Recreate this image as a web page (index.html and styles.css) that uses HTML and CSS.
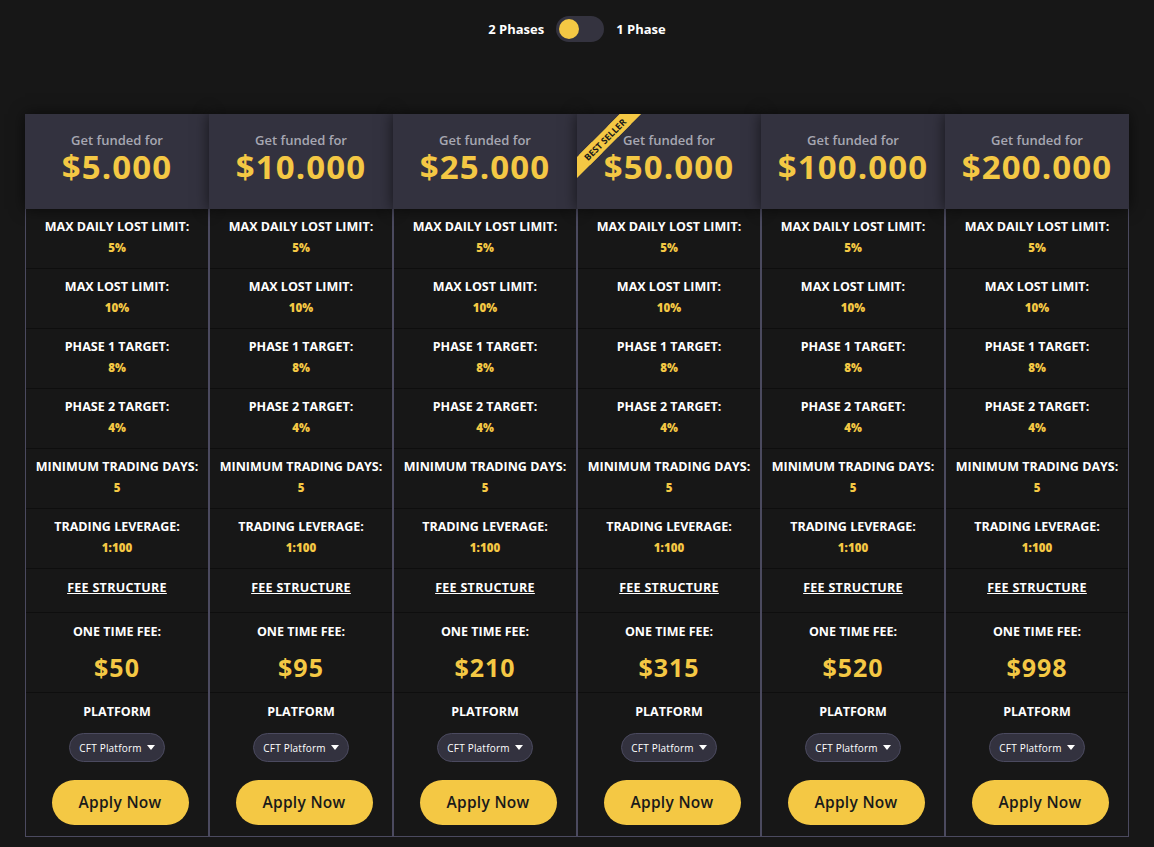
FILE: index.html
```html
<!DOCTYPE html>
<html lang="en">
<head>
    <meta charset="UTF-8">
    <meta name="viewport" content="width=device-width, initial-scale=1.0">
    <title>Funding Challenges</title>
    <link rel="stylesheet" href="styles.css">
</head>
<body>
    <!-- Phase switch -->
    <div class="phase-switch">
        <span>2 Phases</span>
        <div class="toggle"><div class="knob"></div></div>
        <span>1 Phase</span>
    </div>

    <!-- Plans -->
    <div class="plans">
        <div class="plan">
            <div class="plan-head"><p class="head-label">Get funded for</p><p class="head-price">$5.000</p></div>
            <div class="plan-body">
                <div class="row"><p class="row-title">MAX DAILY LOST LIMIT:</p><p class="row-value">5%</p></div>
                <div class="row"><p class="row-title">MAX LOST LIMIT:</p><p class="row-value">10%</p></div>
                <div class="row"><p class="row-title">PHASE 1 TARGET:</p><p class="row-value">8%</p></div>
                <div class="row"><p class="row-title">PHASE 2 TARGET:</p><p class="row-value">4%</p></div>
                <div class="row"><p class="row-title">MINIMUM TRADING DAYS:</p><p class="row-value">5</p></div>
                <div class="row"><p class="row-title">TRADING LEVERAGE:</p><p class="row-value">1:100</p></div>
                <div class="row fee-link"><a href="#">FEE STRUCTURE</a></div>
                <div class="row fee"><p class="row-title">ONE TIME FEE:</p><p class="fee-price">$50</p></div>
                <div class="platform">
                    <p class="row-title">PLATFORM</p>
                    <button class="dropdown">CFT Platform <svg width="8" height="5" viewBox="0 0 8 5"><path d="M0 0h8L4 5z" fill="#fff"/></svg></button>
                    <button class="apply">Apply Now</button>
                </div>
            </div>
        </div>
        <div class="plan">
            <div class="plan-head"><p class="head-label">Get funded for</p><p class="head-price">$10.000</p></div>
            <div class="plan-body">
                <div class="row"><p class="row-title">MAX DAILY LOST LIMIT:</p><p class="row-value">5%</p></div>
                <div class="row"><p class="row-title">MAX LOST LIMIT:</p><p class="row-value">10%</p></div>
                <div class="row"><p class="row-title">PHASE 1 TARGET:</p><p class="row-value">8%</p></div>
                <div class="row"><p class="row-title">PHASE 2 TARGET:</p><p class="row-value">4%</p></div>
                <div class="row"><p class="row-title">MINIMUM TRADING DAYS:</p><p class="row-value">5</p></div>
                <div class="row"><p class="row-title">TRADING LEVERAGE:</p><p class="row-value">1:100</p></div>
                <div class="row fee-link"><a href="#">FEE STRUCTURE</a></div>
                <div class="row fee"><p class="row-title">ONE TIME FEE:</p><p class="fee-price">$95</p></div>
                <div class="platform">
                    <p class="row-title">PLATFORM</p>
                    <button class="dropdown">CFT Platform <svg width="8" height="5" viewBox="0 0 8 5"><path d="M0 0h8L4 5z" fill="#fff"/></svg></button>
                    <button class="apply">Apply Now</button>
                </div>
            </div>
        </div>
        <div class="plan">
            <div class="plan-head"><p class="head-label">Get funded for</p><p class="head-price">$25.000</p></div>
            <div class="plan-body">
                <div class="row"><p class="row-title">MAX DAILY LOST LIMIT:</p><p class="row-value">5%</p></div>
                <div class="row"><p class="row-title">MAX LOST LIMIT:</p><p class="row-value">10%</p></div>
                <div class="row"><p class="row-title">PHASE 1 TARGET:</p><p class="row-value">8%</p></div>
                <div class="row"><p class="row-title">PHASE 2 TARGET:</p><p class="row-value">4%</p></div>
                <div class="row"><p class="row-title">MINIMUM TRADING DAYS:</p><p class="row-value">5</p></div>
                <div class="row"><p class="row-title">TRADING LEVERAGE:</p><p class="row-value">1:100</p></div>
                <div class="row fee-link"><a href="#">FEE STRUCTURE</a></div>
                <div class="row fee"><p class="row-title">ONE TIME FEE:</p><p class="fee-price">$210</p></div>
                <div class="platform">
                    <p class="row-title">PLATFORM</p>
                    <button class="dropdown">CFT Platform <svg width="8" height="5" viewBox="0 0 8 5"><path d="M0 0h8L4 5z" fill="#fff"/></svg></button>
                    <button class="apply">Apply Now</button>
                </div>
            </div>
        </div>
        <div class="plan">
            <div class="plan-head">
                <div class="ribbon">BEST SELLER</div>
                <p class="head-label">Get funded for</p><p class="head-price">$50.000</p>
            </div>
            <div class="plan-body">
                <div class="row"><p class="row-title">MAX DAILY LOST LIMIT:</p><p class="row-value">5%</p></div>
                <div class="row"><p class="row-title">MAX LOST LIMIT:</p><p class="row-value">10%</p></div>
                <div class="row"><p class="row-title">PHASE 1 TARGET:</p><p class="row-value">8%</p></div>
                <div class="row"><p class="row-title">PHASE 2 TARGET:</p><p class="row-value">4%</p></div>
                <div class="row"><p class="row-title">MINIMUM TRADING DAYS:</p><p class="row-value">5</p></div>
                <div class="row"><p class="row-title">TRADING LEVERAGE:</p><p class="row-value">1:100</p></div>
                <div class="row fee-link"><a href="#">FEE STRUCTURE</a></div>
                <div class="row fee"><p class="row-title">ONE TIME FEE:</p><p class="fee-price">$315</p></div>
                <div class="platform">
                    <p class="row-title">PLATFORM</p>
                    <button class="dropdown">CFT Platform <svg width="8" height="5" viewBox="0 0 8 5"><path d="M0 0h8L4 5z" fill="#fff"/></svg></button>
                    <button class="apply">Apply Now</button>
                </div>
            </div>
        </div>
        <div class="plan">
            <div class="plan-head"><p class="head-label">Get funded for</p><p class="head-price">$100.000</p></div>
            <div class="plan-body">
                <div class="row"><p class="row-title">MAX DAILY LOST LIMIT:</p><p class="row-value">5%</p></div>
                <div class="row"><p class="row-title">MAX LOST LIMIT:</p><p class="row-value">10%</p></div>
                <div class="row"><p class="row-title">PHASE 1 TARGET:</p><p class="row-value">8%</p></div>
                <div class="row"><p class="row-title">PHASE 2 TARGET:</p><p class="row-value">4%</p></div>
                <div class="row"><p class="row-title">MINIMUM TRADING DAYS:</p><p class="row-value">5</p></div>
                <div class="row"><p class="row-title">TRADING LEVERAGE:</p><p class="row-value">1:100</p></div>
                <div class="row fee-link"><a href="#">FEE STRUCTURE</a></div>
                <div class="row fee"><p class="row-title">ONE TIME FEE:</p><p class="fee-price">$520</p></div>
                <div class="platform">
                    <p class="row-title">PLATFORM</p>
                    <button class="dropdown">CFT Platform <svg width="8" height="5" viewBox="0 0 8 5"><path d="M0 0h8L4 5z" fill="#fff"/></svg></button>
                    <button class="apply">Apply Now</button>
                </div>
            </div>
        </div>
        <div class="plan">
            <div class="plan-head"><p class="head-label">Get funded for</p><p class="head-price">$200.000</p></div>
            <div class="plan-body">
                <div class="row"><p class="row-title">MAX DAILY LOST LIMIT:</p><p class="row-value">5%</p></div>
                <div class="row"><p class="row-title">MAX LOST LIMIT:</p><p class="row-value">10%</p></div>
                <div class="row"><p class="row-title">PHASE 1 TARGET:</p><p class="row-value">8%</p></div>
                <div class="row"><p class="row-title">PHASE 2 TARGET:</p><p class="row-value">4%</p></div>
                <div class="row"><p class="row-title">MINIMUM TRADING DAYS:</p><p class="row-value">5</p></div>
                <div class="row"><p class="row-title">TRADING LEVERAGE:</p><p class="row-value">1:100</p></div>
                <div class="row fee-link"><a href="#">FEE STRUCTURE</a></div>
                <div class="row fee"><p class="row-title">ONE TIME FEE:</p><p class="fee-price">$998</p></div>
                <div class="platform">
                    <p class="row-title">PLATFORM</p>
                    <button class="dropdown">CFT Platform <svg width="8" height="5" viewBox="0 0 8 5"><path d="M0 0h8L4 5z" fill="#fff"/></svg></button>
                    <button class="apply">Apply Now</button>
                </div>
            </div>
        </div>
    </div>
</body>
</html>
```
FILE: styles.css
```css
body {
    margin: 0;
    font-family: 'Open Sans', 'DejaVu Sans', sans-serif;
    background: #171717;
    color: white;
    text-align: center;
}
p { margin: 0; }

/* phase switch */
.phase-switch {
    display: flex;
    justify-content: center;
    align-items: center;
    gap: 12px;
    padding-top: 16px;
    font-size: 13px;
    font-weight: 700;
}
.toggle {
    width: 48px;
    height: 26px;
    border-radius: 13px;
    background: #34333f;
    display: flex;
    align-items: center;
    padding: 0 3px;
    box-sizing: border-box;
}
.knob { width: 20px; height: 20px; border-radius: 50%; background: #f4c844; }

/* plans */
.plans {
    display: grid;
    grid-template-columns: repeat(6, 184px);
    justify-content: center;
    margin-top: 72px;
}
.plan { display: flex; flex-direction: column; }
.plan-head {
    position: relative;
    overflow: hidden;
    height: 95px;
    background: #33323f;
    box-shadow: 0 0 14px rgba(0, 0, 0, 0.6);
    display: flex;
    flex-direction: column;
    justify-content: center;
    padding-bottom: 8px;
    box-sizing: border-box;
}
.head-label { font-size: 13px; font-weight: 600; color: #a7a7b2; line-height: 17px; }
.head-price { font-size: 33px; font-weight: 700; color: #f4c844; line-height: 35px; letter-spacing: 1.1px; }
/* band is stretched with shadows so the label box stays inside the header */
.ribbon {
    position: absolute;
    left: -1px;
    top: 18px;
    width: 58px;
    height: 15px;
    line-height: 15px;
    background: #f4c844;
    box-shadow: -40px 0 0 #f4c844, 40px 0 0 #f4c844;
    color: #1a1a1a;
    font-size: 9px;
    font-weight: 700;
    white-space: nowrap;
    transform: rotate(-45deg);
}

.plan-body {
    border: 1px solid #4b4a5f;
    border-top: none;
}
.row {
    height: 60px;
    border-bottom: 1px solid #0e0e0e;
    display: flex;
    flex-direction: column;
    justify-content: center;
    gap: 5px;
    box-sizing: border-box;
    padding-bottom: 4px;
}
.row-title { font-size: 12.5px; font-weight: 700; }
.row-value { font-size: 11.5px; font-weight: 800; color: #f4c844; }
.fee-link { height: 44px; padding-bottom: 7px; }
.fee-link a { color: white; font-size: 12.5px; font-weight: 700; letter-spacing: 0.3px; }
.fee { height: 80px; justify-content: flex-start; gap: 10px; padding: 10px 0 0; }
.fee-price { font-size: 25px; font-weight: 700; color: #f4c844; letter-spacing: 1px; }

.platform {
    display: flex;
    flex-direction: column;
    align-items: center;
    padding: 10px 0 11px;
}
.dropdown {
    margin-top: 13px;
    height: 29px;
    padding: 0 9px;
    border: 1px solid #4b4a5f;
    border-radius: 15px;
    background: #33323f;
    color: white;
    font-family: inherit;
    font-size: 10px;
    letter-spacing: 0.2px;
    display: flex;
    align-items: center;
    gap: 5px;
}
.apply {
    margin-top: 18px;
    margin-left: 6px;
    width: 137px;
    height: 45px;
    border: none;
    border-radius: 23px;
    background: #f4c844;
    color: #1a1a1a;
    font-family: inherit;
    font-size: 15.5px;
    font-weight: 600;
    letter-spacing: 0.3px;
    padding-bottom: 2px;
    cursor: pointer;
}
```
